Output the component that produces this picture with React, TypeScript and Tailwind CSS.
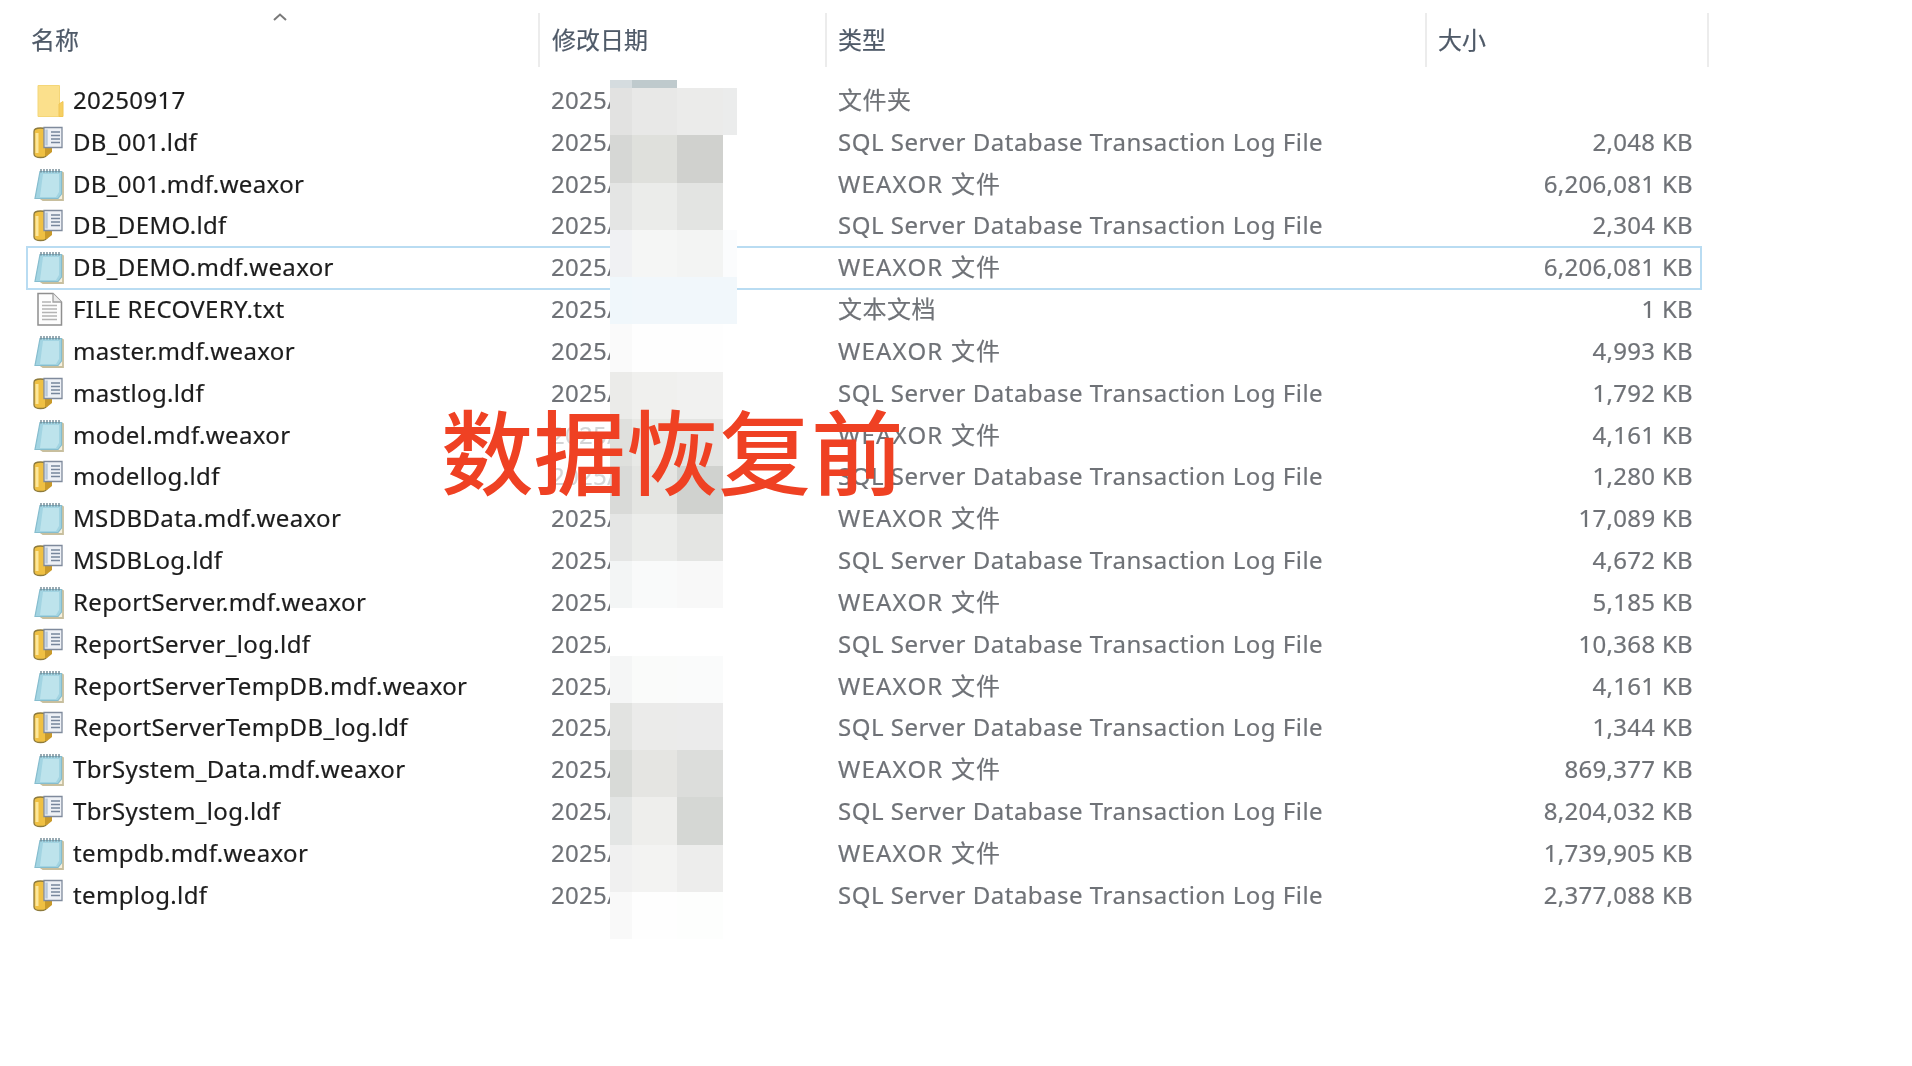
import React from "react";

const Folder = () => (
  <svg width="32" height="34" viewBox="0 0 32 34" className="shrink-0">
    <path d="M5 2.5h21.5v31H5z" fill="#fbe08c" stroke="#f4d678" strokeWidth="1" />
    <path d="M26 21l4-2.5V33.500h-4z" fill="#f6cf63" stroke="#f0c654" strokeWidth="1" />
  </svg>
);
const Ldf = () => (
  <svg width="32" height="34" viewBox="0 0 32 34" className="shrink-0">
    <path d="M1 6.500C1 4 4 3 7.500 3S14 4 14 6.500V29c0 2.600-3 3.500-6.500 3.500S1 31.600 1 29z" fill="#efc043" stroke="#8d7a3c" strokeWidth="1.300" />
    <path d="M4 8v20" stroke="#fce79a" strokeWidth="3" />
    <path d="M12 23h7v4l-5 4h-2z" fill="#c99a2b" />
    <path d="M11 2.500h18v20H11z" fill="#eef1f6" stroke="#7f8a9c" strokeWidth="1.300" />
    <path d="M13.500 4.500v16" stroke="#b8c8da" strokeWidth="2.500" />
    <path d="M18 7h9M18 10.500h9M18 14h9M18 17.500h9" stroke="#77869c" strokeWidth="1.500" />
  </svg>
);
const Mdf = () => (
  <svg width="32" height="34" viewBox="0 0 32 34" className="shrink-0">
    <path d="M7 31l3 2h20V6l-1.500-1" fill="#f5f0de" stroke="#c8bf9e" strokeWidth="1.800" />
    <path d="M7 4.500h21.500V27L25 31.500H2z" fill="#a2d4e2" stroke="#86bdce" strokeWidth="1.200" />
    <path d="M10 7h16v18l-3 5H7z" fill="#bde3ec" />
    <path d="M8 2v3.500M11 2v3.500M14 2v3.500M17 2v3.500M20 2v3.500M23 2v3.500M26 2v3.500" stroke="#6f8894" strokeWidth="1.400" />
  </svg>
);
const Txt = () => (
  <svg width="32" height="34" viewBox="0 0 32 34" className="shrink-0">
    <path d="M5 1.500h15l8.500 8.500v23H5z" fill="#fdfdfd" stroke="#8f8f8f" strokeWidth="1.500" />
    <path d="M20 1.500V10h8.500" fill="#ececec" stroke="#a0a0a0" strokeWidth="1.300" />
    <path d="M9 10h9M9 13.500h15M9 17h15M9 20.500h15M9 24h15M9 27.500h15" stroke="#b4b4b4" strokeWidth="1.500" />
  </svg>
);

const SQL = "SQL Server Database Transaction Log File";
const WX = "WEAXOR 文件";
type Kind = "folder" | "ldf" | "mdf" | "txt";
const rows: [Kind, string, string, string][] = [
  ["folder", "20250917", "文件夹", ""],
  ["ldf", "DB_001.ldf", SQL, "2,048 KB"],
  ["mdf", "DB_001.mdf.weaxor", WX, "6,206,081 KB"],
  ["ldf", "DB_DEMO.ldf", SQL, "2,304 KB"],
  ["mdf", "DB_DEMO.mdf.weaxor", WX, "6,206,081 KB"],
  ["txt", "FILE RECOVERY.txt", "文本文档", "1 KB"],
  ["mdf", "master.mdf.weaxor", WX, "4,993 KB"],
  ["ldf", "mastlog.ldf", SQL, "1,792 KB"],
  ["mdf", "model.mdf.weaxor", WX, "4,161 KB"],
  ["ldf", "modellog.ldf", SQL, "1,280 KB"],
  ["mdf", "MSDBData.mdf.weaxor", WX, "17,089 KB"],
  ["ldf", "MSDBLog.ldf", SQL, "4,672 KB"],
  ["mdf", "ReportServer.mdf.weaxor", WX, "5,185 KB"],
  ["ldf", "ReportServer_log.ldf", SQL, "10,368 KB"],
  ["mdf", "ReportServerTempDB.mdf.weaxor", WX, "4,161 KB"],
  ["ldf", "ReportServerTempDB_log.ldf", SQL, "1,344 KB"],
  ["mdf", "TbrSystem_Data.mdf.weaxor", WX, "869,377 KB"],
  ["ldf", "TbrSystem_log.ldf", SQL, "8,204,032 KB"],
  ["mdf", "tempdb.mdf.weaxor", WX, "1,739,905 KB"],
  ["ldf", "templog.ldf", SQL, "2,377,088 KB"],
];

const icons = { folder: Folder, ldf: Ldf, mdf: Mdf, txt: Txt };

const mosaic: string[][] = [
  ["#e2e2e1", "#e8e8e7", "#ebebea", "#ebecec"],
  ["#d6d7d5", "#dfe0dc", "#d0d1ce", "#ffffff"],
  ["#e4e5e4", "#ebecea", "#e3e4e2", "#ffffff"],
  ["#f0f1f3", "#f5f6f5", "#f3f4f3", "#fbfcfd"],
  ["#f0f7fb", "#f1f7fb", "#f1f7fb", "#f1f7fb"],
  ["#fafafa", "#fefefe", "#fefefe", "#ffffff"],
  ["#ebebe9", "#f0f0ee", "#f1f1f0", "#ffffff"],
  ["#dfe0dd", "#e8e9e6", "#e3e4e2", "#ffffff"],
  ["#d9dad8", "#e4e5e2", "#d0d2cf", "#ffffff"],
  ["#e5e6e5", "#ecedeb", "#e4e5e3", "#ffffff"],
  ["#f3f5f5", "#f9fafa", "#f8f8f8", "#ffffff"],
  ["#ffffff", "#ffffff", "#ffffff", "#ffffff"],
  ["#f5f6f6", "#fafbfa", "#fafbfb", "#ffffff"],
  ["#e2e3e1", "#ebebea", "#ebebeb", "#ffffff"],
  ["#d8dad7", "#e5e5e2", "#dcdddb", "#ffffff"],
  ["#e3e5e4", "#eeeeec", "#d5d7d4", "#ffffff"],
  ["#f0f0f0", "#f3f3f2", "#ededec", "#ffffff"],
  ["#f9f9f9", "#fefefe", "#fdfefd", "#ffffff"],
];

const font = "font-['Noto_Sans','Noto_Sans_CJK_SC',sans-serif]";

export default function App() {
  return (
    <div className={`relative h-[1066px] w-full overflow-hidden bg-white ${font} text-[24px]`}>
      <div className="blur-[0.6px] [-webkit-text-stroke:0.2px]">
        <div className="grid h-[79px] grid-cols-[512px_287px_600px_284px] pl-[26px] pt-[13px] text-[#4f5a68]">
          <div className="relative flex h-[54px] items-center pl-[5px]">
            名称
            <svg width="16" height="10" viewBox="0 0 16 10" className="absolute left-[246px] top-[-1px]">
              <path d="M2 8l6-5.500L14 8" fill="none" stroke="#7a7a7a" strokeWidth="2" />
            </svg>
          </div>
          <div className="flex h-[54px] items-center border-l-2 border-[#ececec] pl-[12px]">修改日期</div>
          <div className="flex h-[54px] items-center border-l-2 border-[#ececec] pl-[11px]">类型</div>
          <div className="flex h-[54px] items-center border-x-2 border-[#ececec] pl-[11px]">大小</div>
        </div>
        <div className="pl-[26px]">
          {rows.map(([kind, name, type, size], i) => {
            const Icon = icons[kind];
            const trackType = type === SQL ? "tracking-[0.5px]" : type === WX ? "tracking-[1.2px]" : "tracking-[0.5px]";
            return (
              <div
                key={name}
                className="relative grid h-[41.84px] w-[1676px] grid-cols-[512px_287px_600px_277px] items-center"
              >
                {i === 4 && <div className="absolute inset-x-0 top-0 h-[44px] border-2 border-[#b9dcf2]" />}
                <div className="flex items-center gap-[8px] pl-[7px] text-[#1c1c1c]">
                  <Icon />
                  <span className="tracking-[0.35px]">{name}</span>
                </div>
                <div className="pl-[13px] tracking-[0.3px] text-[#6f7277]">2025/</div>
                <div className={`pl-[13px] text-[#6f7277] ${trackType}`}>{type}</div>
                <div className="pr-[9px] text-right tracking-[0.3px] text-[#6f7277]">{size}</div>
              </div>
            );
          })}
        </div>
        <div className="absolute left-[610px] top-[80px]">
          <div className="flex h-[8px]">
            <div className="w-[22px] bg-[#d5dcdf]" />
            <div className="w-[45px] bg-[#bfcacd]" />
          </div>
          {mosaic.map((row, r) => (
            <div key={r} className="flex h-[47.3px]">
              {row.map((c, k) => (
                <div
                  key={k}
                  className={k === 0 ? "w-[22px]" : k === 3 ? "w-[14px]" : k === 1 ? "w-[45px]" : "w-[46px]"}
                  style={{ backgroundColor: c }}
                />
              ))}
            </div>
          ))}
        </div>
      </div>
      <div className="absolute left-[436px] top-[405px] h-[95px] w-[174px] bg-white/70" />
      <div className="absolute left-[441px] top-[389px] font-['Noto_Sans_CJK_SC',sans-serif] text-[92.5px] font-medium leading-[118px] text-[#ef4123]">
        数据恢复前
      </div>
    </div>
  );
}
